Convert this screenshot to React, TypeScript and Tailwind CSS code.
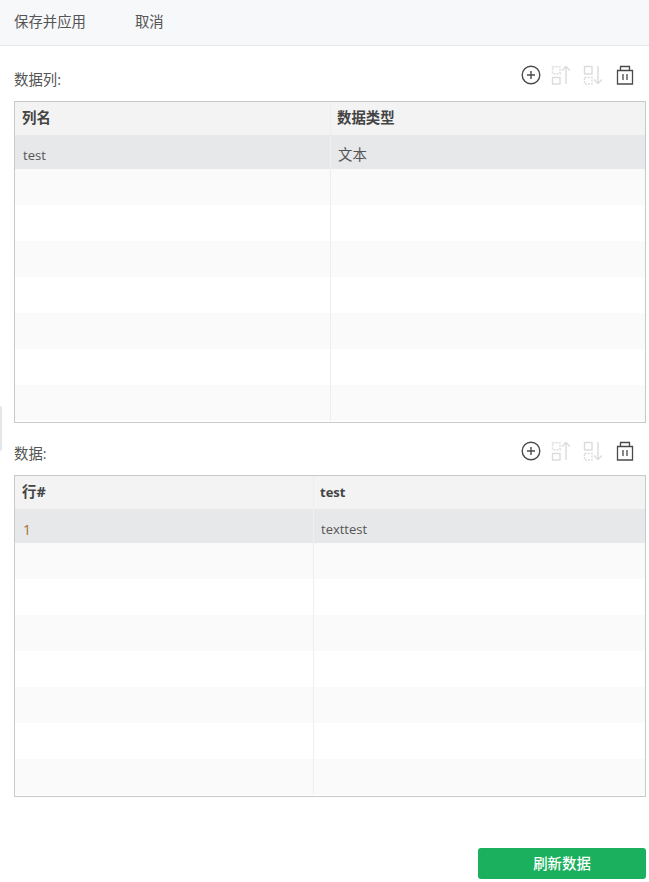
import React from "react";

const font = { fontFamily: '"Open Sans", "Noto Sans CJK SC", sans-serif' };

function Plus() {
  return (
    <svg width="20" height="20" viewBox="0 0 20 20" fill="none" stroke="#4a4a4a" strokeWidth="1.4">
      <circle cx="10" cy="10" r="8.8" />
      <path d="M10 6v8M6 10h8" />
    </svg>
  );
}
function MoveUp() {
  return (
    <svg width="20" height="20" viewBox="0 0 20 20" fill="none" stroke="#dcdcdc" strokeWidth="1.4">
      <rect x="1.5" y="1.7" width="7.5" height="7" strokeDasharray="2 1.2" />
      <rect x="1.5" y="12.5" width="7.5" height="6.5" />
      <path d="M15 19V1.5M11 5.5l4-4 4 4" />
    </svg>
  );
}
function MoveDown() {
  return (
    <svg width="20" height="20" viewBox="0 0 20 20" fill="none" stroke="#dcdcdc" strokeWidth="1.4">
      <rect x="1.5" y="1.5" width="7.5" height="7.5" />
      <rect x="1.5" y="12.5" width="7.5" height="6.5" strokeDasharray="2 1.2" />
      <path d="M15 1v17.5M11 14.5l4 4 4-4" />
    </svg>
  );
}
function Trash() {
  return (
    <svg width="20" height="20" viewBox="0 0 20 20" fill="none" stroke="#4a4a4a" strokeWidth="1.3">
      <path d="M2.5 5.5h15v13.5h-15zM5.5 5.5V1.5h9v4M8 9v6M12 9v6" />
    </svg>
  );
}

function Toolbar({ offset }: { offset: string }) {
  return (
    <div className={`flex items-center ${offset}`}>
      <div className="mr-[10px] flex">
        <Plus />
      </div>
      <div className="mr-[12px] flex">
        <MoveUp />
      </div>
      <div className="mr-[12px] flex">
        <MoveDown />
      </div>
      <Trash />
    </div>
  );
}

function Section({
  label,
  h1,
  h2,
  h2Class,
  c1,
  c2,
  c1Class,
  c2Class,
  col,
  offset,
}: {
  label: string;
  h1: string;
  h2: string;
  h2Class: string;
  c1: string;
  c2: string;
  c1Class: string;
  c2Class: string;
  col: string;
  offset: string;
}) {
  const rows = [0, 1, 2, 3, 4, 5, 6];
  return (
    <section>
      <div className="flex items-start justify-between h-[32px] pr-[11px]">
        <span className="text-[14.4px] text-[#555] leading-[20px] mt-[10px]">{label}</span>
        <Toolbar offset={offset} />
      </div>
      <div className="mt-[9px] h-[322px] border border-[#c9c9c9] overflow-hidden">
        <div className={`grid ${col} h-[33px] bg-[#f3f3f3] text-[14.4px] font-bold text-[#444]`}>
          <div className="pl-[7px] pb-[1px] flex items-center border-r border-[#ededed]">{h1}</div>
          <div className={`pl-[6px] flex items-center ${h2Class}`}>{h2}</div>
        </div>
        <div className={`grid ${col} h-[34px] bg-[#e7e8e9] text-[#555]`}>
          <div className={`pl-[8px] flex items-center border-r border-[#f0f0f0] ${c1Class}`}>{c1}</div>
          <div className={`pl-[7px] flex items-center ${c2Class}`}>{c2}</div>
        </div>
        {rows.map((r) => (
          <div key={r} className={`grid ${col} h-[36px] ${r % 2 === 0 ? "bg-[#fafafa]" : "bg-white"}`}>
            <div className="border-r border-[#eeeeee]" />
            <div />
          </div>
        ))}
      </div>
    </section>
  );
}

export default function App() {
  return (
    <div className="relative w-[649px] h-[882px] bg-white overflow-hidden" style={font}>
      <header className="flex items-center h-[46px] bg-[#f7f8fa] border-b border-[#e8e8e8] pl-[14px] pb-[2px] gap-[49px] text-[14.4px] text-[#555]">
        <span>保存并应用</span>
        <span>取消</span>
      </header>
      <main className="pl-[14px] pr-[3px] pt-[14px] flex flex-col gap-[11px]">
        <Section
          label="数据列:"
          h1="列名"
          h2="数据类型"
          h2Class="pb-[1px]"
          c1="test"
          c2="文本"
          c1Class="pt-[7px] text-[13px]"
          c2Class="pt-[5px] text-[14.4px]"
          col="grid-cols-[316px_1fr]"
          offset="mt-[5px]"
        />
        <Section
          label="数据:"
          h1="行#"
          h2="test"
          h2Class="pt-[1px] text-[13px]"
          c1="1"
          c2="texttest"
          c1Class="pt-[7px] text-[14px] text-[#a9702f]"
          c2Class="pt-[7px] text-[13px]"
          col="grid-cols-[299px_1fr]"
          offset="mt-[7px]"
        />
      </main>
      <div className="flex justify-end pr-[3px] mt-[51px]">
        <button className="w-[168px] h-[31px] rounded-[3px] bg-[#1bb05d] text-white text-[14.4px] font-medium">
          刷新数据
        </button>
      </div>
      <div className="absolute left-0 top-[406px] w-[2px] h-[45px] bg-[#e3e6e9] rounded-r-[2px]" />
    </div>
  );
}
